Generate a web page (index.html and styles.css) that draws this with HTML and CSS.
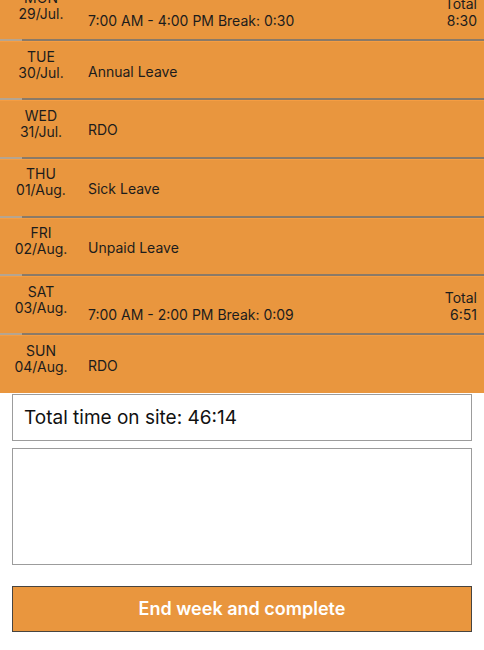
FILE: index.html
```html
<!DOCTYPE html>
<html lang="en">
<head>
    <meta charset="UTF-8">
    <meta name="viewport" content="width=device-width, initial-scale=1.0">
    <title>Timesheet - Week</title>
    <link rel="stylesheet" href="styles.css">
</head>
<body>
    <!-- days of the week -->
    <div class="days">
        <div class="day">
            <div class="day-date">MON<br>29/Jul.</div>
            <div class="day-info">
                <div class="site"></div>
                <div>7:00 AM - 4:00 PM Break: 0:30</div>
            </div>
            <div class="day-total">Total<br>8:30</div>
        </div>
        <div class="day">
            <div class="day-date">TUE<br>30/Jul.</div>
            <div class="day-info">Annual Leave</div>
        </div>
        <div class="day">
            <div class="day-date">WED<br>31/Jul.</div>
            <div class="day-info">RDO</div>
        </div>
        <div class="day">
            <div class="day-date">THU<br>01/Aug.</div>
            <div class="day-info">Sick Leave</div>
        </div>
        <div class="day">
            <div class="day-date">FRI<br>02/Aug.</div>
            <div class="day-info">Unpaid Leave</div>
        </div>
        <div class="day">
            <div class="day-date">SAT<br>03/Aug.</div>
            <div class="day-info">
                <div class="site"></div>
                <div>7:00 AM - 2:00 PM Break: 0:09</div>
            </div>
            <div class="day-total">Total<br>6:51</div>
        </div>
        <div class="day">
            <div class="day-date">SUN<br>04/Aug.</div>
            <div class="day-info">RDO</div>
        </div>
    </div>

    <!-- summary -->
    <div class="summary">
        <div class="total-box">Total time on site: 46:14</div>
        <textarea class="notes"></textarea>
        <button class="complete">End week and complete</button>
    </div>
</body>
</html>
```

FILE: styles.css
```css
body {
    font-family: Inter, "Noto Sans", sans-serif;
    background-color: #fff;
    color: #1c1c1c;
    margin: 0;
    padding: 0;
}

.days {
    margin-top: -17.5px;
    background-color: #e9963e;
}

.day {
    display: flex;
    align-items: center;
    box-sizing: border-box;
    height: 58.75px;
    border-bottom: 2px solid #8a7a68;
    border-image: linear-gradient(to right, #b5a591 23px, #8a7a68 23px) 1;
    box-shadow: inset 0 1px 0 #f59d42;
    font-size: 14px;
    line-height: 17px;
}

.day:last-child {
    border-bottom: none;
    height: 57.5px;
}

.day-date {
    align-self: flex-start;
    width: 82px;
    padding-top: 7.5px;
    text-align: center;
    font-size: 14px;
    line-height: 16px;
}

.day-info {
    flex: 1;
    padding-left: 6px;
    padding-top: 3px;
}

.site {
    height: 17px;
}

.day-total {
    padding-right: 7px;
    padding-top: 3px;
    text-align: right;
}

.summary {
    padding: 1px 12px 0;
}

.total-box {
    box-sizing: border-box;
    height: 47px;
    border: 1px solid #9c9c9c;
    padding: 0 11px;
    display: flex;
    align-items: center;
    font-size: 19px;
    color: #111;
}

.notes {
    display: block;
    box-sizing: border-box;
    width: 100%;
    height: 117px;
    margin-top: 7px;
    border: 1px solid #9c9c9c;
    border-radius: 0;
    resize: none;
    outline: none;
}

.complete {
    display: block;
    box-sizing: border-box;
    width: 100%;
    height: 46px;
    margin-top: 21px;
    background-color: #e9963e;
    border: 1px solid #474440;
    border-radius: 0;
    color: #fff;
    font-family: Inter, "Noto Sans", sans-serif;
    font-size: 18px;
    font-weight: 600;
    cursor: pointer;
}
```
